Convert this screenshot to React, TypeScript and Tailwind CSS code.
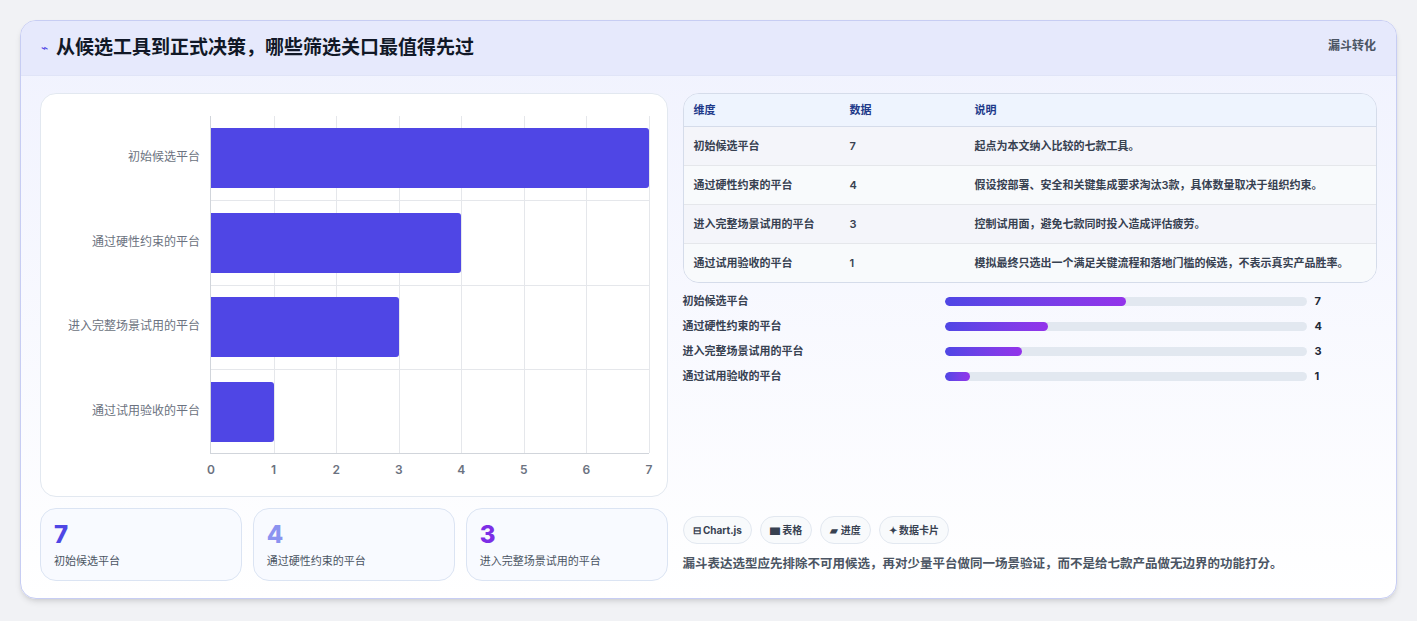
const rows = [
  { name: "初始候选平台", v: 7, note: "起点为本文纳入比较的七款工具。" },
  { name: "通过硬性约束的平台", v: 4, note: "假设按部署、安全和关键集成要求淘汰3款，具体数量取决于组织约束。" },
  { name: "进入完整场景试用的平台", v: 3, note: "控制试用面，避免七款同时投入造成评估疲劳。" },
  { name: "通过试用验收的平台", v: 1, note: "模拟最终只选出一个满足关键流程和落地门槛的候选，不表示真实产品胜率。" },
];

function Chart() {
  return (
    <div className="h-[404px] rounded-2xl border border-[#e2e8f0] bg-white relative">
      <div className="absolute left-[169px] top-[22px] w-[439px] h-[338px] border-l border-b border-[#d1d5db]">
        {[1, 2, 3, 4, 5, 6, 7].map((i) => (
          <div key={i} className="absolute top-0 h-full w-px bg-[#e5e7eb]" style={{ left: `${(i / 7) * 100}%` }} />
        ))}
        {[1, 2, 3].map((i) => (
          <div key={i} className="absolute left-0 w-full h-px bg-[#e5e7eb]" style={{ top: `${i * 25}%` }} />
        ))}
        {rows.map((r, i) => (
          <div key={r.name} className="absolute left-0 h-[60px] bg-[#4f46e5] rounded-r-[3px]" style={{ top: i * 84.5 + 12, width: `${(r.v / 7) * 100}%` }} />
        ))}
        {rows.map((r, i) => (
          <div key={r.name} className="absolute right-[calc(100%+11px)] whitespace-nowrap text-[12px] text-[#6b7280]" style={{ top: i * 84.5 + 32 }}>
            {r.name}
          </div>
        ))}
        {[0, 1, 2, 3, 4, 5, 6, 7].map((i) => (
          <div key={i} className="absolute top-[345px] -translate-x-1/2 text-[12px] font-semibold text-[#6b7280]" style={{ left: `${(i / 7) * 100}%` }}>
            {i}
          </div>
        ))}
      </div>
    </div>
  );
}

export default function App() {
  return (
    <div className="w-[1417px] h-[621px] bg-[#f1f2f5] pt-5 pl-5" style={{ fontFamily: "Inter, 'Noto Sans CJK SC', sans-serif" }}>
      <div className="w-[1377px] h-[579px] rounded-2xl border border-[#c7cdf3] bg-gradient-to-b from-[#f0f2fe] to-white overflow-hidden shadow-md">
        <div className="h-[55px] flex items-center justify-between px-5 bg-[#e6e9fc] border-b border-[#e0e4f7]">
          <div className="flex items-center gap-2">
            <span className="text-[#4f46e5] text-[12px]">⌁</span>
            <h1 className="text-[19px] font-bold text-[#111827]">从候选工具到正式决策，哪些筛选关口最值得先过</h1>
          </div>
          <span className="text-[12px] font-semibold text-[#4b5563] self-start mt-[16px]">漏斗转化</span>
        </div>
        <div className="flex gap-[15px] px-[19px] pt-[17px]">
          <div className="w-[628px] flex flex-col gap-[11px]">
            <Chart />
            <div className="grid grid-cols-3 gap-[11px]">
              {rows.slice(0, 3).map((r, i) => (
                <div key={r.name} className="h-[73px] rounded-2xl border border-[#dbe4f3] bg-[#f8faff] px-[13px] pt-[12px]">
                  <div className={`text-[24px] font-extrabold leading-7 ${["text-[#4f46e5]", "text-[#8b93f0]", "text-[#7c2ee6]"][i]}`}>{r.v}</div>
                  <div className="text-[11px] text-[#4b5563] mt-1">{r.name}</div>
                </div>
              ))}
            </div>
          </div>
          <div className="w-[695px] flex flex-col">
            <div className="rounded-2xl border border-[#d5dcea] overflow-hidden text-[11px] font-semibold text-[#374151]">
              <div className="flex h-[33px] items-center bg-[#eef4fe] text-[#1e3a8a] border-b border-[#d5dcea]">
                <div className="w-[166px] pl-[10px]">维度</div>
                <div className="w-[125px]">数据</div>
                <div className="flex-1">说明</div>
              </div>
              {rows.map((r, i) => (
                <div key={r.name} className={`flex py-[10px] leading-[18px] ${i % 2 ? "bg-[#f8fafc]" : "bg-[#f4f5fa]"} ${i < 3 ? "border-b border-[#e5e7eb]" : ""}`}>
                  <div className="w-[166px] pl-[10px]">{r.name}</div>
                  <div className="w-[125px]">{r.v}</div>
                  <div className="flex-1 pr-2">{r.note}</div>
                </div>
              ))}
            </div>
            <div className="flex flex-col gap-[11px] mt-[11px] text-[11px] font-semibold text-[#374151]">
              {rows.map((r) => (
                <div key={r.name} className="flex items-center h-[14px]">
                  <div className="w-[262px]">{r.name}</div>
                  <div className="w-[362px] h-[9px] rounded-full bg-[#e2e8f0] overflow-hidden">
                    <div className="h-full rounded-full bg-gradient-to-r from-[#4f46e5] to-[#9333ea]" style={{ width: `${(r.v / 7) * 50}%` }} />
                  </div>
                  <div className="ml-[8px] font-bold text-[#1f2937]">{r.v}</div>
                </div>
              ))}
            </div>
            <div className="flex gap-[8px] mt-[133px] text-[10px] font-bold text-[#374151]">
              {["⊟ Chart.js", "▆ 表格", "▰ 进度", "✦ 数据卡片"].map((t) => (
                <span key={t} className="h-[28px] px-[9px] flex items-center rounded-full border border-[#e2e8f0] bg-[#f8fafc]">{t}</span>
              ))}
            </div>
            <p className="mt-[11px] text-[12.5px] font-semibold text-[#4b5563]">漏斗表达选型应先排除不可用候选，再对少量平台做同一场景验证，而不是给七款产品做无边界的功能打分。</p>
          </div>
        </div>
      </div>
    </div>
  );
}
